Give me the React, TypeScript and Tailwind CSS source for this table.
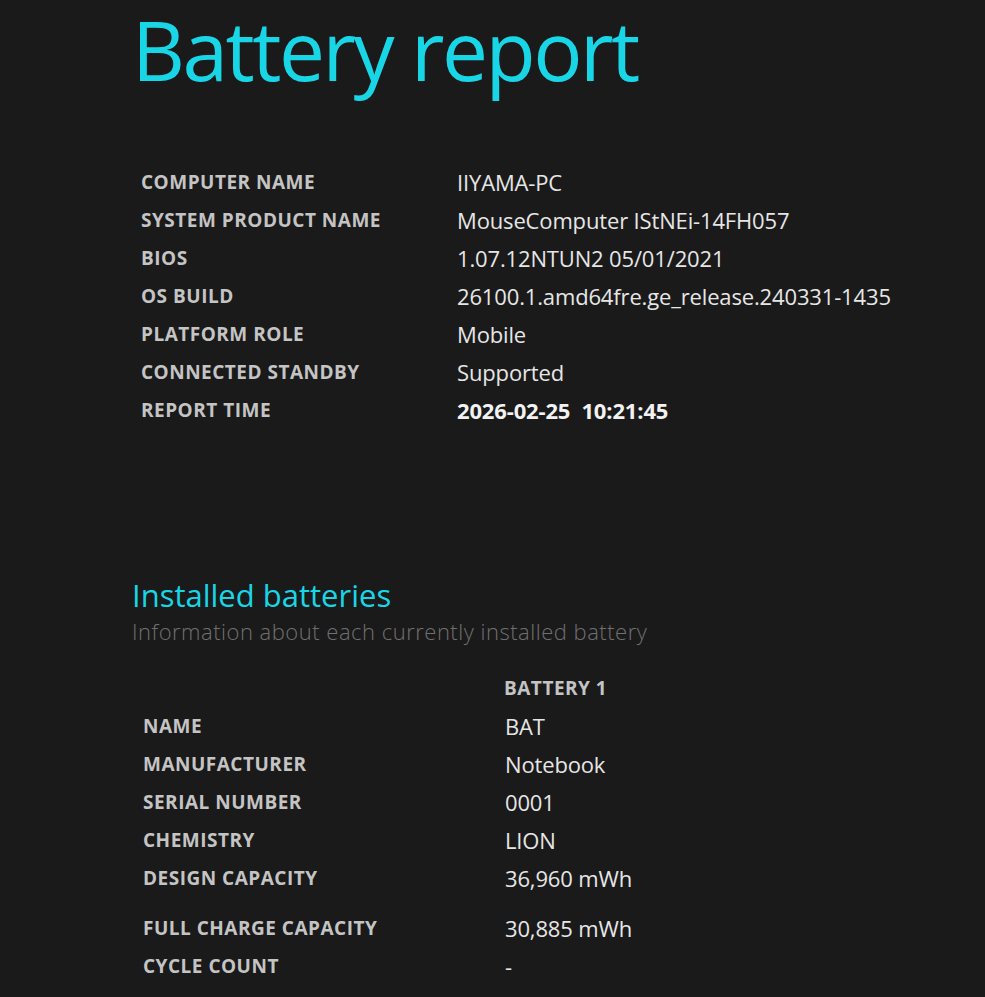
import React from "react";

const sys: [string, string, boolean?][] = [
  ["COMPUTER NAME", "IIYAMA-PC"],
  ["SYSTEM PRODUCT NAME", "MouseComputer IStNEi-14FH057"],
  ["BIOS", "1.07.12NTUN2 05/01/2021"],
  ["OS BUILD", "26100.1.amd64fre.ge_release.240331-1435"],
  ["PLATFORM ROLE", "Mobile"],
  ["CONNECTED STANDBY", "Supported"],
  ["REPORT TIME", "2026-02-25\u00a0\u00a010:21:45", true],
];

const bat: [string, string, string][] = [
  ["NAME", "BAT", ""],
  ["MANUFACTURER", "Notebook", ""],
  ["SERIAL NUMBER", "0001", ""],
  ["CHEMISTRY", "LION", ""],
  ["DESIGN CAPACITY", "36,960 mWh", ""],
  ["FULL CHARGE CAPACITY", "30,885 mWh", "mt-[12px]"],
  ["CYCLE COUNT", "-", ""],
];

export default function App() {
  return (
    <div
      className="min-h-[997px] w-full bg-[#1a1a1a] text-[#e6e6e6]"
      style={{ fontFamily: '"Open Sans", "Noto Sans", sans-serif' }}
    >
      <div className="pl-[132px] pt-px">
        <h1 className="-mt-[8px] text-[82px] leading-[112px] text-[#19d6e7] tracking-[-2.5px]">
          Battery report
        </h1>
        <div className="mt-[58px] pl-[9px]">
          {sys.map(([k, v, b]) => (
            <div key={k} className="flex h-[38px] items-center">
              <div className="w-[316px] text-[19px] font-bold text-[#c4c4c4] tracking-[0.5px]">{k}</div>
              <div className={`text-[22px] tracking-[-0.15px] ${b ? "font-bold text-[#f2f2f2]" : "text-[#e6e6e6]"}`}>{v}</div>
            </div>
          ))}
        </div>
        <h2 className="mt-[148px] text-[31px] leading-[36px] text-[#19d6e7]">Installed batteries</h2>
        <div className="text-[22px] leading-[36px] font-light text-[#707070] tracking-[0.5px]">
          Information about each currently installed battery
        </div>
        <div className="mt-[20px] pl-[11px]">
          <div className="flex h-[38px] items-center">
            <div className="w-[361px]" />
            <div className="text-[19px] font-bold text-[#c4c4c4] tracking-[0.5px]">BATTERY 1</div>
          </div>
          {bat.map(([k, v, m]) => (
            <div key={k} className={`flex h-[38px] items-center ${m}`}>
              <div className="w-[362px] text-[19px] font-bold text-[#c4c4c4] tracking-[0.5px]">{k}</div>
              <div className="text-[22px] tracking-[-0.15px] text-[#e6e6e6]">{v}</div>
            </div>
          ))}
        </div>
      </div>
    </div>
  );
}
